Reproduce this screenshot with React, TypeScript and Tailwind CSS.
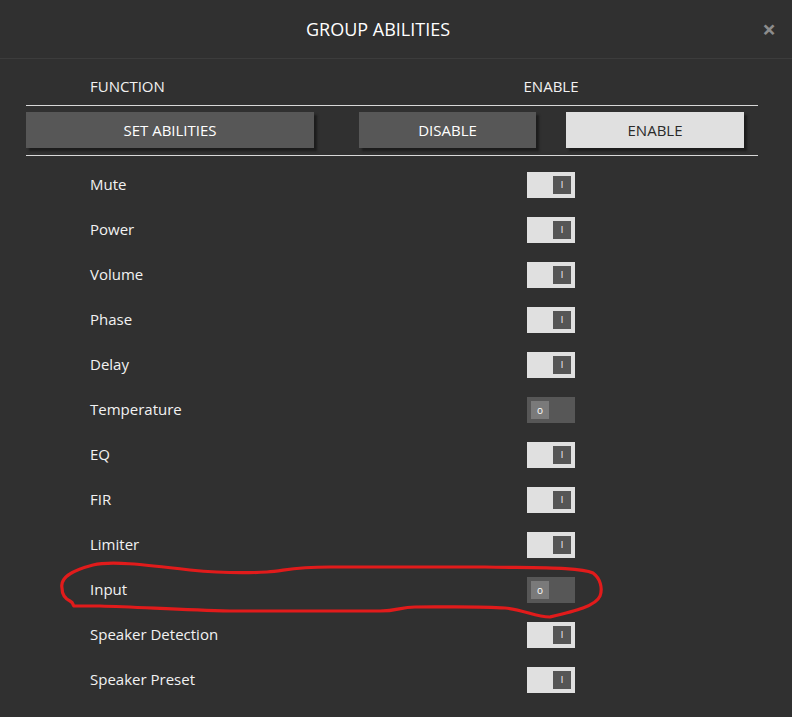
import React from "react";

type Ability = { name: string; on: boolean };

const abilities: Ability[] = [
  { name: "Mute", on: true },
  { name: "Power", on: true },
  { name: "Volume", on: true },
  { name: "Phase", on: true },
  { name: "Delay", on: true },
  { name: "Temperature", on: false },
  { name: "EQ", on: true },
  { name: "FIR", on: true },
  { name: "Limiter", on: true },
  { name: "Input", on: false },
  { name: "Speaker Detection", on: true },
  { name: "Speaker Preset", on: true },
];

function Toggle({ on }: { on: boolean }) {
  if (on) {
    return (
      <div className="w-[48px] h-[26px] bg-[#e0e0e0] flex items-center justify-end pr-[4px]">
        <div className="w-[18px] h-[18px] bg-[#555555] flex items-center justify-center text-[9px] leading-none text-white">
          I
        </div>
      </div>
    );
  }
  return (
    <div className="w-[48px] h-[26px] bg-[#575757] flex items-center justify-start pl-[4px]">
      <div className="w-[18px] h-[18px] bg-[#7a7a7a] flex items-center justify-center text-[10px] leading-none text-white">
        o
      </div>
    </div>
  );
}

export default function App() {
  return (
    <div className="relative w-[792px] h-[717px] overflow-hidden bg-[#303030] text-[#f2f2f2] font-['Open_Sans',sans-serif]">
      {/* title bar */}
      <div className="h-[59px] flex items-center border-b border-[#3c3c3c]">
        <div className="flex-1 flex justify-center pl-[8px] pt-[1px]">
          <span className="text-[18px] text-white">GROUP ABILITIES</span>
        </div>
        <div className="w-[44px] flex justify-center pr-[2px]">
          <span className="text-[24px] font-bold leading-none text-[#8c8c8c]">×</span>
        </div>
      </div>

      <div className="ml-[26px] w-[732px]">
        {/* column headings */}
        <div className="h-[46px] grid grid-cols-[501px_48px] items-center text-[15px] pt-[9px]">
          <div className="pl-[64px]">FUNCTION</div>
          <div className="flex justify-center whitespace-nowrap">ENABLE</div>
        </div>
        <div className="h-px bg-[#d8d8d8]" />

        {/* bulk actions */}
        <div className="mt-[6px] h-[36px] flex text-[15px]">
          <button className="w-[288px] h-[36px] bg-[#575757] text-white shadow-[3px_3px_2px_#1c1c1c]">
            SET ABILITIES
          </button>
          <button className="ml-[45px] w-[177px] h-[36px] bg-[#575757] text-white shadow-[3px_3px_2px_#1c1c1c]">
            DISABLE
          </button>
          <button className="ml-[30px] w-[178px] h-[36px] bg-[#e0e0e0] text-[#2a2a2a] shadow-[3px_3px_2px_#1c1c1c]">
            ENABLE
          </button>
        </div>
        <div className="mt-[7px] h-px bg-[#d8d8d8]" />

        {/* ability list */}
        <div className="mt-[6px] flex flex-col">
          {abilities.map((a) => (
            <div key={a.name} className="h-[45px] grid grid-cols-[501px_48px] items-center">
              <div className="pl-[64px] text-[15px]">{a.name}</div>
              <Toggle on={a.on} />
            </div>
          ))}
        </div>
      </div>

      {/* hand-drawn marker around the Input row */}
      <svg
        className="absolute inset-0 pointer-events-none"
        width="792"
        height="717"
        viewBox="0 0 792 717"
        fill="none"
      >
        <path
          d="M 62 588 C 60 578, 70 571, 93 565 C 110 561, 140 564, 190 570 C 220 573, 250 573, 267 572 C 285 571, 290 567, 330 567 L 485 567 C 540 568, 580 567, 593 573 C 600 578, 603 588, 600 596 C 596 606, 575 611, 550 617 C 535 617, 525 610, 505 608 C 480 606, 440 607, 415 607 C 400 607, 398 611, 380 611 L 230 611 C 180 610, 140 607, 100 606 L 74 606 C 72 604, 74 603, 70 601 C 64 598, 62 594, 62 588 Z"
          stroke="#e11b1b"
          strokeWidth="3.2"
          strokeLinejoin="round"
        />
      </svg>
    </div>
  );
}
